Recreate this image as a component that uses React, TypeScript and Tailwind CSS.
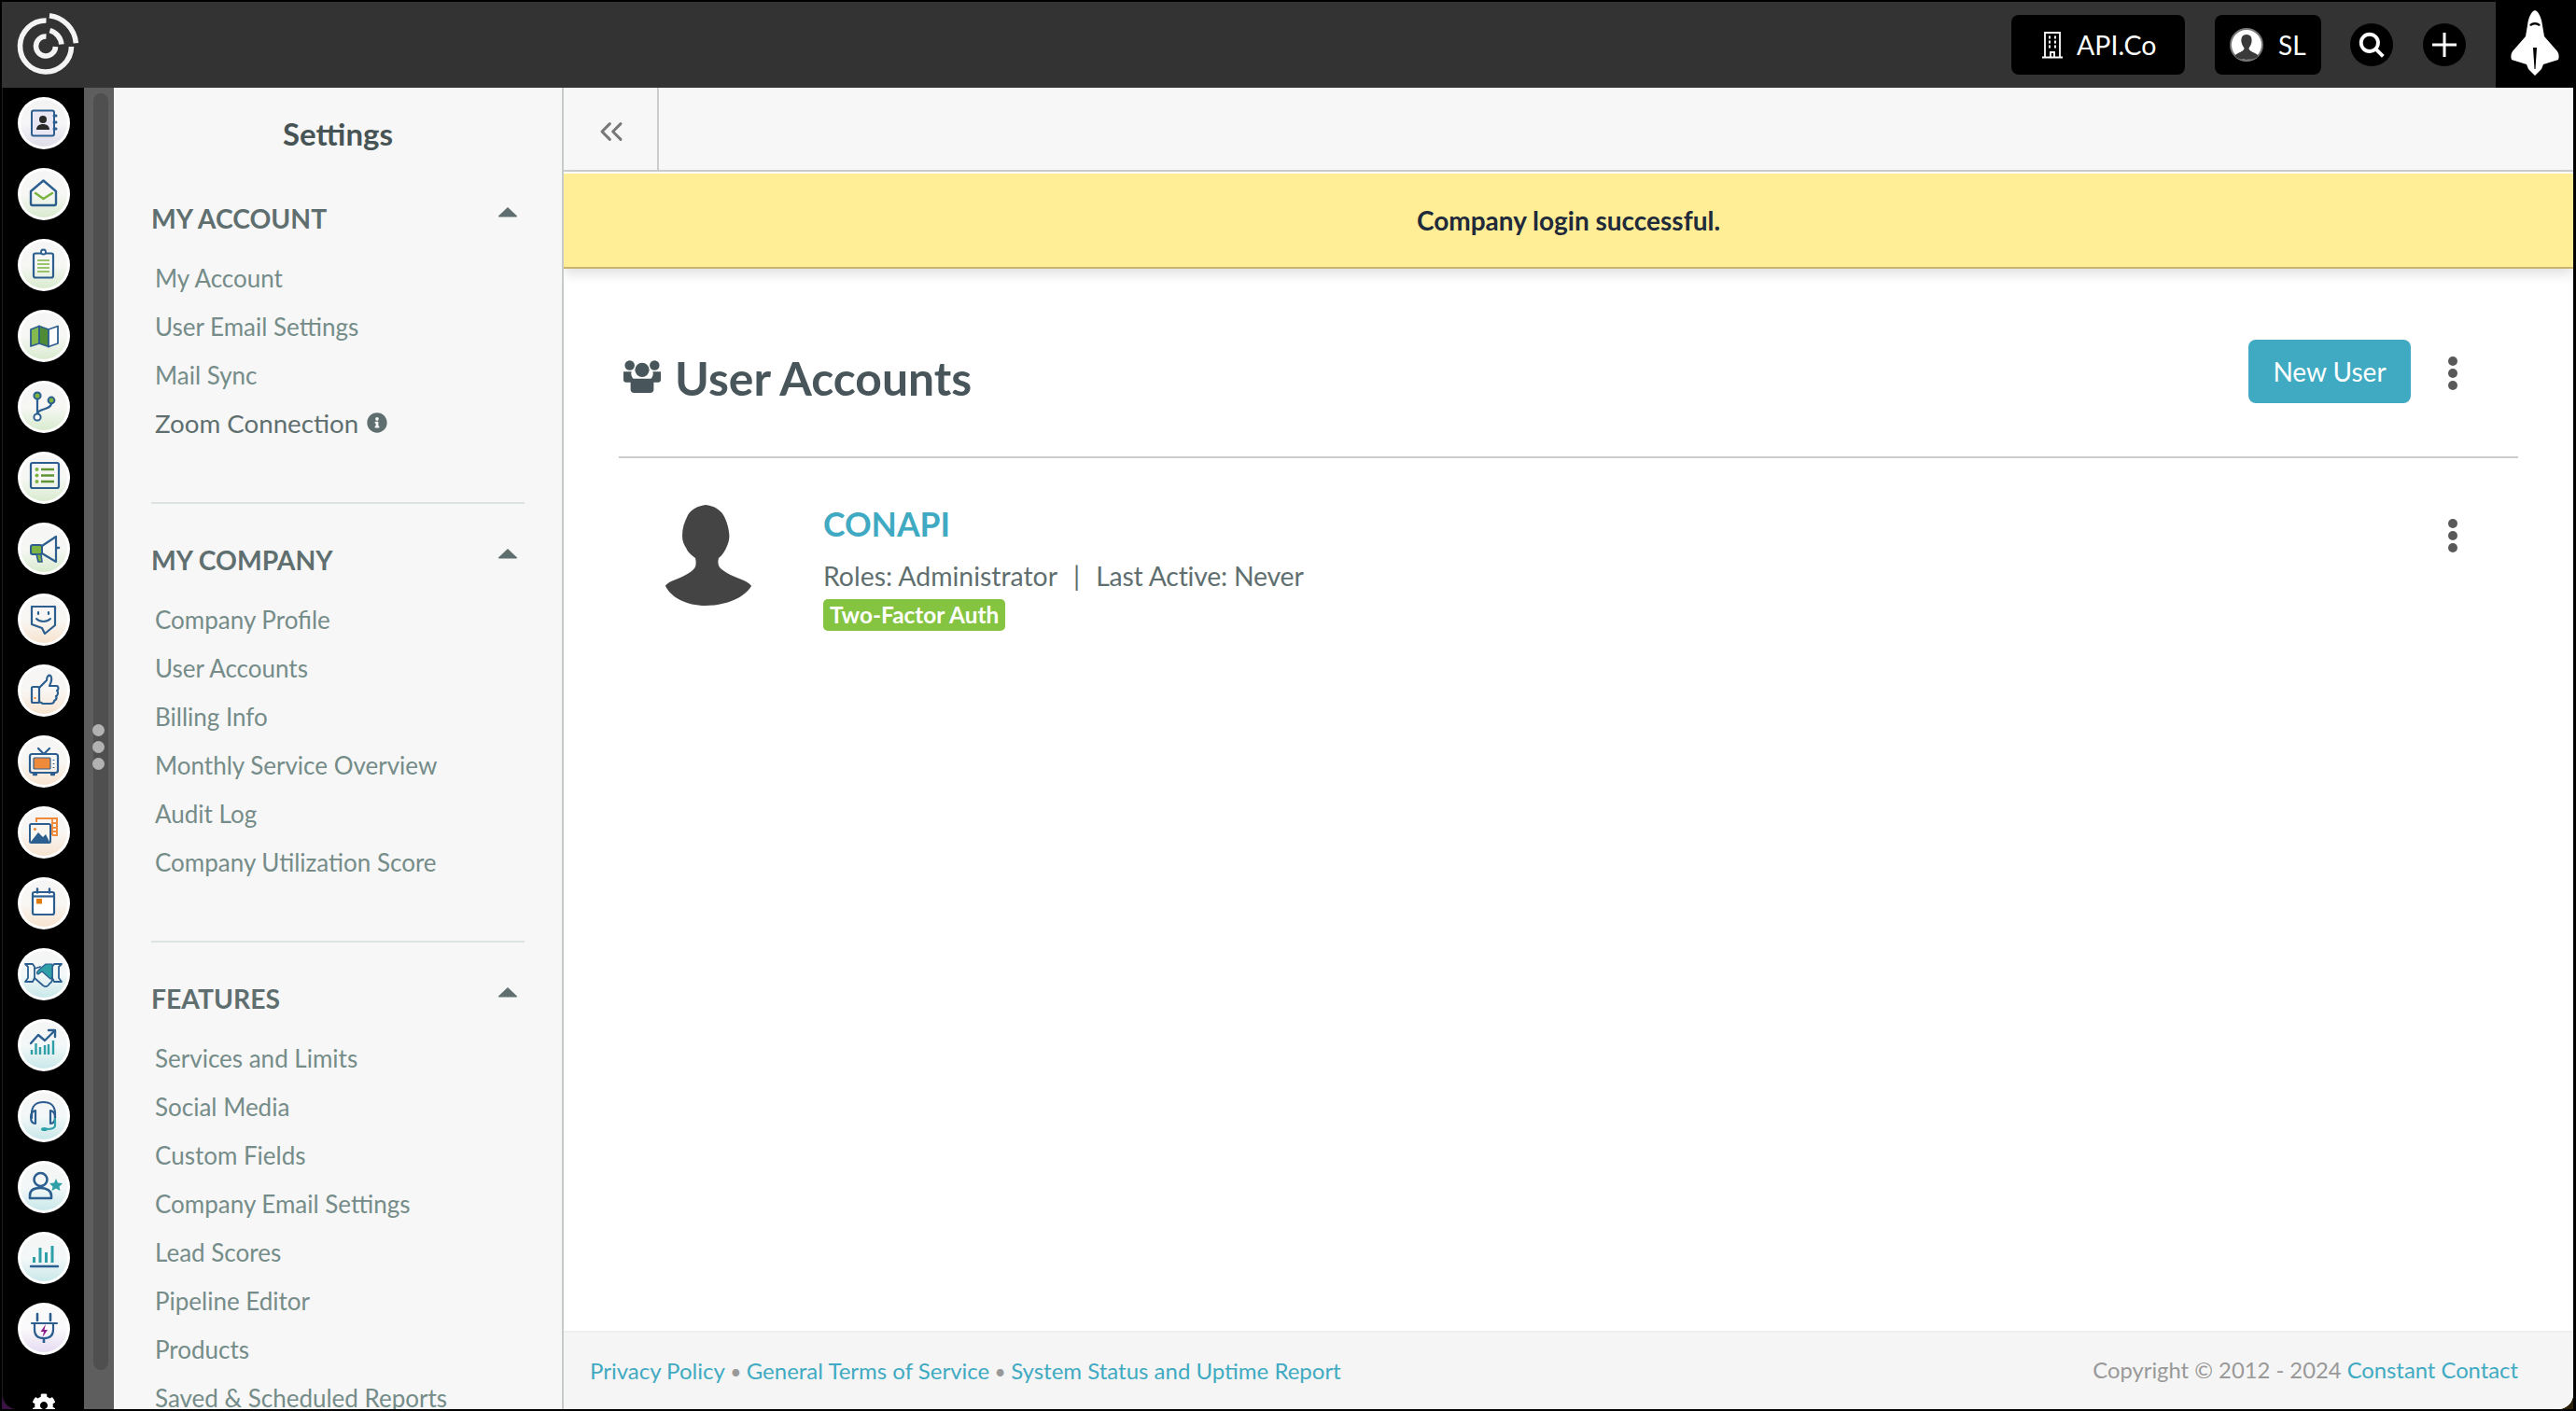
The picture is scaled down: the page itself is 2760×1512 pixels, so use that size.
import type { ReactNode } from "react";
import { ChevronsLeft } from "lucide-react";
import { FaCog, FaInfoCircle } from "react-icons/fa";

const NAVY = "#2c5f8f";
const GREEN = "#7cb342";
const ORANGE = "#ef8a3a";
const TEAL = "#2f9fa8";

const TONES = {
  lavender: "bg-linear-to-b from-[#f3f3f3] via-[#f6f6f8] to-[#dfdde8]",
  green: "bg-linear-to-b from-[#f5f5f5] via-[#f7f8f5] to-[#d9ebcf]",
  orange: "bg-linear-to-b from-[#f5f5f5] via-[#f9f7f4] to-[#f7e3cf]",
  teal: "bg-linear-to-b from-[#f5f5f5] via-[#f4f8f8] to-[#c9e8ea]",
  purple: "bg-linear-to-b from-[#fafafa] via-[#faf9fb] to-[#e6dcf2]",
};

const line = { fill: "none", stroke: NAVY, strokeWidth: 2.2, strokeLinecap: "round", strokeLinejoin: "round" } as const;

const RAIL_ICONS: { tone: keyof typeof TONES; art: ReactNode }[] = [
  {
    tone: "lavender",
    art: (
      <>
        <rect x="15" y="14.5" width="24" height="27" rx="2" fill="#e9e7f3" stroke={NAVY} strokeWidth="2" />
        <path d="M39 20h2M39 27h2M39 34h2" stroke={NAVY} strokeWidth="3" strokeLinecap="round" />
        <circle cx="27" cy="24" r="4" fill="#2a2a2a" />
        <path d="M20 35c0-4 3-6 7-6s7 2 7 6z" fill="#2a2a2a" />
      </>
    ),
  },
  {
    tone: "green",
    art: (
      <>
        <path d="M14 25L27.5 13.5L41 25V38a2 2 0 0 1-2 2H16a2 2 0 0 1-2-2Z" {...line} strokeWidth={2.4} />
        <path d="M19 27L27.5 33L37 27" fill="none" stroke={GREEN} strokeWidth="2.6" strokeLinecap="round" strokeLinejoin="round" />
      </>
    ),
  },
  {
    tone: "green",
    art: (
      <>
        <rect x="17" y="15.5" width="21" height="26" rx="2" {...line} />
        <circle cx="27.5" cy="14" r="2.5" fill="#fff" stroke={NAVY} strokeWidth="1.8" />
        <path d="M21 23h13M21 27h13M21 31h13M21 35h13" stroke={GREEN} strokeWidth="1.6" />
      </>
    ),
  },
  {
    tone: "green",
    art: (
      <>
        <path d="M14 21L23 17.5V36L14 39Z" fill="#83b94f" stroke={NAVY} strokeWidth="1.8" strokeLinejoin="round" />
        <path d="M23 17.5L33 21V39.5L23 36Z" fill="#4f8a34" stroke={NAVY} strokeWidth="1.8" strokeLinejoin="round" />
        <path d="M33 21L43 17.5V36L33 39.5Z" fill="#fff" stroke={NAVY} strokeWidth="1.8" strokeLinejoin="round" />
      </>
    ),
  },
  {
    tone: "green",
    art: (
      <>
        <path d="M21 20V36M36 24C36 32 21 29 21 36" {...line} />
        <circle cx="21" cy="16" r="3.6" fill={GREEN} stroke={NAVY} strokeWidth="2" />
        <circle cx="36" cy="21" r="3.4" fill={GREEN} stroke={NAVY} strokeWidth="2" />
        <circle cx="21" cy="39" r="3.6" fill="#fff" stroke={NAVY} strokeWidth="2" />
      </>
    ),
  },
  {
    tone: "green",
    art: (
      <>
        <rect x="14" y="12" width="30" height="27" rx="2" {...line} />
        <circle cx="20.5" cy="19" r="2" fill={GREEN} />
        <circle cx="20.5" cy="25.5" r="2" fill={GREEN} />
        <circle cx="20.5" cy="32" r="2" fill={GREEN} />
        <path d="M25 19h14M25 25.5h14M25 32h14" stroke="#5f9435" strokeWidth="2.6" />
      </>
    ),
  },
  {
    tone: "green",
    art: (
      <>
        <rect x="14" y="24" width="12" height="10" rx="2" fill={GREEN} stroke={NAVY} strokeWidth="2" />
        <path d="M20 34h5l1 8h-4z" fill={GREEN} stroke={NAVY} strokeWidth="1.6" />
        <path d="M26 25L41 15V42L26 33" {...line} />
        <path d="M42 27h2" stroke={NAVY} strokeWidth="2.6" strokeLinecap="round" />
      </>
    ),
  },
  {
    tone: "orange",
    art: (
      <>
        <path d="M15 14H40V34L29 43L26 37L15 33Z" {...line} />
        <path d="M22 20v2M33 20v2" stroke={NAVY} strokeWidth="2.2" strokeLinecap="round" />
        <path d="M20 27C24 31 31 31 35 27" fill="none" stroke={NAVY} strokeWidth="2" strokeLinecap="round" />
      </>
    ),
  },
  {
    tone: "orange",
    art: (
      <>
        <rect x="15" y="24" width="8" height="17" rx="1.5" {...line} />
        <rect x="17.5" y="35" width="2" height="2" fill={ORANGE} />
        <path d="M23 25L31 17C31 13 33 11 35 12C37 14 36 19 34 23H42C44 24 44 27 42 28C44 30 43 33 41 34C42 36 41 38 39 39C39 41 37 42 35 42H27L23 40" {...line} />
      </>
    ),
  },
  {
    tone: "orange",
    art: (
      <>
        <rect x="13" y="20" width="30" height="20" rx="2.5" {...line} />
        <rect x="17" y="24" width="18" height="12" rx="1" fill={ORANGE} stroke={NAVY} strokeWidth="1.2" />
        <path d="M22 14L28 20L34 14" {...line} />
        <path d="M38.5 26v1M38.5 30v1M38.5 34v1" stroke={NAVY} strokeWidth="1.8" />
        <path d="M17 42h3M36 42h3" stroke={NAVY} strokeWidth="2.4" strokeLinecap="round" />
      </>
    ),
  },
  {
    tone: "orange",
    art: (
      <>
        <path d="M20 17V13H42V31H37" fill="none" stroke={ORANGE} strokeWidth="2" />
        <path d="M37 13V31M37 18h5M37 23h5M37 27h5" stroke={ORANGE} strokeWidth="1.8" />
        <rect x="13" y="19" width="22" height="20" rx="1.5" fill="#f9f6f1" stroke={NAVY} strokeWidth="2" />
        <circle cx="18.5" cy="24.5" r="1.6" fill={ORANGE} />
        <path d="M14 38L22 28L27 33L30 30L34 38Z" fill={NAVY} />
      </>
    ),
  },
  {
    tone: "orange",
    art: (
      <>
        <rect x="16" y="16" width="23" height="24" rx="2" fill="#fff" stroke={NAVY} strokeWidth="2.2" />
        <path d="M16 20.5h23" stroke={NAVY} strokeWidth="2.2" />
        <path d="M21 12.5v4M34 12.5v4" stroke={NAVY} strokeWidth="2.4" strokeLinecap="round" />
        <rect x="20" y="23" width="6" height="5.5" fill="#e07b10" />
      </>
    ),
  },
  {
    tone: "teal",
    art: (
      <>
        <path d="M8 17H16L18 20V32L16 36H8L11 32V20Z" fill="none" stroke={NAVY} strokeWidth="1.8" strokeLinejoin="round" />
        <path d="M47 17H39L37 20V32L39 36H47L44 32V20Z" fill="none" stroke={NAVY} strokeWidth="1.8" strokeLinejoin="round" />
        <path d="M18 32L27 40C30 42 33 41 34 38C36 37 37 35 37 33M18 22L24 20" fill="none" stroke={NAVY} strokeWidth="1.8" strokeLinecap="round" />
        <path d="M24 22L30 17H37V31L35 33L26 25L22 28C20 28 20 25 22 24Z" fill={TEAL} stroke={NAVY} strokeWidth="1.2" strokeLinejoin="round" />
      </>
    ),
  },
  {
    tone: "teal",
    art: (
      <>
        <path d="M14 26L22 17L29 23L39 13" {...line} strokeWidth={2.4} />
        <path d="M33 12H40V19" {...line} strokeWidth={2.4} />
        <path d="M15 33v5M19.500 26v12M24 30v8M29 28v10M33 27v11M38 23v15" stroke={TEAL} strokeWidth="2.400" />
      </>
    ),
  },
  {
    tone: "teal",
    art: (
      <>
        <path d="M15 30V25C15 17 20 13 27.5 13S40 17 40 25V30" {...line} />
        <path d="M19 22V36C15 36 14 32 14 29S15 23 19 22Z" {...line} />
        <path d="M35 22V36C39 36 40 32 40 29S39 23 35 22Z" {...line} />
        <path d="M40 30V38C40 41 36 42 31 42" fill="none" stroke={TEAL} strokeWidth="2.2" />
        <ellipse cx="28.5" cy="42" rx="3.5" ry="2" fill={TEAL} />
      </>
    ),
  },
  {
    tone: "teal",
    art: (
      <>
        <circle cx="24.5" cy="20" r="7" {...line} strokeWidth={2.6} />
        <path d="M13 40V37C13 32 17 29 24 29S36 32 36 37V40Z" {...line} strokeWidth={2.6} />
        <path d="M41 19L43 23.5L48 24L44.5 27.5L45.5 32L41 29.5L36.5 32L37.5 27.5L34 24L39 23.5Z" fill={TEAL} />
      </>
    ),
  },
  {
    tone: "teal",
    art: (
      <>
        <path d="M17.500 27v6M24 17v16M30.500 22v11M37 15v18" stroke={TEAL} strokeWidth="3" />
        <path d="M14 37h29" stroke={NAVY} strokeWidth="2.400" strokeLinecap="round" />
      </>
    ),
  },
  {
    tone: "purple",
    art: (
      <>
        <path d="M21 12v7M35 12v7" stroke={NAVY} strokeWidth="2.6" strokeLinecap="round" />
        <path d="M15 22H42" {...line} />
        <path d="M18 22V29C18 35 22 38 28 38S38 35 38 29V22" {...line} />
        <path d="M28 38v5" stroke={NAVY} strokeWidth="2.6" />
        <path d="M30 23L24.500 31H28L26.500 37L32 29H28.500Z" fill="#8c1f8c" />
      </>
    ),
  },
];

const SECTIONS = [
  {
    title: "MY ACCOUNT",
    items: ["My Account", "User Email Settings", "Mail Sync", "Zoom Connection"],
  },
  {
    title: "MY COMPANY",
    items: ["Company Profile", "User Accounts", "Billing Info", "Monthly Service Overview", "Audit Log", "Company Utilization Score"],
  },
  {
    title: "FEATURES",
    items: ["Services and Limits", "Social Media", "Custom Fields", "Company Email Settings", "Lead Scores", "Pipeline Editor", "Products", "Saved & Scheduled Reports"],
  },
];

function Kebab() {
  return (
    <div className="flex w-[10px] flex-col gap-[3px]">
      <span className="size-[10px] rounded-full bg-[#595959]" />
      <span className="size-[10px] rounded-full bg-[#595959]" />
      <span className="size-[10px] rounded-full bg-[#595959]" />
    </div>
  );
}

function TopBar() {
  return (
    <header className="flex h-[92px] shrink-0 items-center bg-[#333333]">
      <svg width="98" height="92" viewBox="2 2 98 92" fill="none" stroke="#f4f4f4" strokeWidth="5.6">
        <path d="M52.960 16.740A32.500 32.500 0 0 1 81.380 46.170" />
        <path d="M76.500 50A27.500 27.500 0 1 1 49.500 22" />
        <path d="M53.400 32.600A17 17 0 0 1 65.900 47.500" />
        <path d="M59.500 50A10.500 10.500 0 1 1 49.500 39" />
      </svg>
      <div className="ml-auto flex items-center">
        <div className="flex h-[64px] w-[186px] items-center rounded-[8px] bg-black pl-[32px] text-white">
          <svg width="24" height="30" viewBox="0 0 24 30" fill="none" stroke="#fff" strokeWidth="1.8">
            <path d="M4 28V2H20V28M1 28.500H23" />
            <path d="M8 7h2M14 7h2M8 12h2M14 12h2M8 17h2M14 17h2" strokeWidth="3" />
            <path d="M10 28v-5h4v5" />
          </svg>
          <span className="ml-[14px] text-[28.500px] leading-none">API.Co</span>
        </div>
        <div className="ml-[32px] flex h-[64px] w-[114px] items-center rounded-[8px] bg-black pl-[16px] text-white">
          <svg width="36" height="36" viewBox="0 0 36 36">
            <circle cx="18" cy="18" r="17" fill="#fff" stroke="#777" strokeWidth="2" />
            <path d="M18 7C13 7 12 11 12.500 15C13 18 14.500 20 15.500 21.500C15.500 24 13 25 9 27C6 28.500 5 30 6 30.500C10 35 26 35 30 30.500C31 30 30 28.500 27 27C23 25 20.500 24 20.500 21.500C21.500 20 23 18 23.500 15C24 11 23 7 18 7Z" fill="#3a3a3a" />
          </svg>
          <span className="ml-[16px] text-[28px] leading-none">SL</span>
        </div>
        <div className="ml-[31px] flex size-[46px] items-center justify-center rounded-full bg-black">
          <svg width="30" height="30" viewBox="0 0 28 28" fill="none" stroke="#fff">
            <circle cx="12" cy="12" r="8.500" strokeWidth="3.600" />
            <path d="M18 18L25.500 25.500" strokeWidth="3.600" />
          </svg>
        </div>
        <div className="ml-[32px] flex size-[46px] items-center justify-center rounded-full bg-black">
          <svg width="28" height="28" viewBox="0 0 28 28" stroke="#fff" strokeWidth="3">
            <path d="M14 1V27M1 14H27" />
          </svg>
        </div>
        <div className="ml-[32px] flex h-[92px] w-[83px] items-start justify-center bg-black pt-[9px]">
          <svg width="52" height="70" viewBox="0 0 52 70">
            <path d="M26 0C30 1 33 8 34 16L36 28L50 44C52 47 52 50 51 53L35 58L33 63L26 70L19 63L17 58L1 53C0 50 0 47 2 44L16 28L18 16C19 8 22 1 26 0Z" fill="#fff" />
            <path d="M20 16C22 12 30 12 32 16L30 17C28 15 24 15 22 17Z" fill="#000" />
            <path d="M24 40H28L26.500 63H25.500Z" fill="#000" />
          </svg>
        </div>
      </div>
    </header>
  );
}

function IconRail() {
  return (
    <nav className="flex w-[88px] shrink-0 flex-col items-center gap-[20px] overflow-hidden rounded-bl-[16px] border-l border-[#1c1c1c] bg-black pt-[10px]">
      {RAIL_ICONS.map((icon, i) => (
        <div key={i} className="size-[56px] shrink-0 rounded-full bg-white p-[3px]">
          <div className={`size-full rounded-full ${TONES[icon.tone]}`}>
            <svg width="50" height="50" viewBox="3 3 50 50">
              {icon.art}
            </svg>
          </div>
        </div>
      ))}
      <FaCog className="mt-[21px] size-[26px] shrink-0 text-white" />
    </nav>
  );
}

function Splitter() {
  return (
    <div className="relative flex w-[32px] shrink-0 justify-start bg-[#5e5e5e] pt-[6px] pb-[42px] pl-[10px]">
      <div className="w-[16px] rounded-[8px] bg-[#4f4f4f]" />
      <div className="absolute top-[682px] left-[9px] flex flex-col gap-[5px]">
        <span className="size-[13px] rounded-full bg-[#b2b2b2]" />
        <span className="size-[13px] rounded-full bg-[#b2b2b2]" />
        <span className="size-[13px] rounded-full bg-[#b2b2b2]" />
      </div>
    </div>
  );
}

function Sidebar() {
  return (
    <aside className="w-[482px] shrink-0 overflow-hidden border-r-2 border-[#c6cbca] bg-[#f7f7f7]">
      <h1 className="mb-[12px] flex h-[102px] items-center justify-center pb-[2px] text-[33px] font-bold text-[#475456]">Settings</h1>
      {SECTIONS.map((section, i) => (
        <section key={section.title}>
          <div className="flex h-[52px] items-center justify-between pr-[47px] pl-[40px]">
            <h2 className="text-[28.300px] font-bold text-[#5f6f6f]">{section.title}</h2>
            <svg className="-mt-[14px]" width="22" height="12" viewBox="0 0 22 12">
              <path d="M11 1L21 10.500Q21.500 11.500 20 11.500H2Q0.500 11.500 1 10.500Z" fill="#5f6f6f" />
            </svg>
          </div>
          <ul className="mt-[12px] pl-[44px]">
            {section.items.map((item) =>
              item === "Zoom Connection" ? (
                <li key={item} className="flex h-[52px] items-center text-[27.700px] text-[#5f6f6f]">
                  {item}
                  <FaInfoCircle className="-mt-[2px] ml-[9px] size-[22px]" />
                </li>
              ) : (
                <li key={item} className="flex h-[52px] items-center pt-[1px] text-[26px] text-[#758c89]">
                  {item}
                </li>
              ),
            )}
          </ul>
          {i < SECTIONS.length - 1 && <div className="mx-[40px] mt-[58px] mb-[34px] h-[2px] w-[400px] bg-[#dde3e2]" />}
        </section>
      ))}
    </aside>
  );
}

function MainPanel() {
  return (
    <main className="flex min-w-0 flex-1 flex-col overflow-hidden rounded-br-[16px] bg-white">
      <div className="flex h-[90px] shrink-0 border-b-2 border-[#cccccc] bg-[#f7f7f7]">
        <div className="flex w-[102px] items-center justify-center border-r-2 border-[#cccccc]">
          <ChevronsLeft className="mt-[5px] ml-[2px]" size={40} strokeWidth={1.8} color="#777777" />
        </div>
      </div>
      <div className="mt-[2px] flex h-[102px] shrink-0 items-center justify-center border-b-2 border-[#c9b56f] bg-[#ffee96] text-[28px] font-bold text-[#1f2a3a] shadow-[0_6px_12px_rgba(0,0,0,0.12)]">
        Company login successful.
      </div>
      <div className="flex-1 px-[59px]">
        <div className="flex h-[203px] items-start justify-between border-b-2 border-[#cccccc] pt-[76px] pr-[65px]">
          <div className="mt-[3px] flex items-center text-[#48555a]">
            <svg className="-mt-[5px] ml-[4px]" width="42" height="40" viewBox="0 0 44 42" fill="currentColor">
              <circle cx="8" cy="9" r="5.500" />
              <circle cx="36" cy="9" r="5.500" />
              <circle cx="22" cy="14" r="8" />
              <path d="M1 16h9c-1 3 0 6 3 9l-1 3H4c-2 0-3-1-3-3ZM43 16h-9c1 3 0 6-3 9l1 3h8c2 0 3-1 3-3Z" />
              <path d="M12 24h20c1 0 3 2 3 5v7c0 3-2 4-4 4H13c-2 0-4-1-4-4v-7c0-3 2-5 3-5Z" />
            </svg>
            <h2 className="ml-[14px] text-[49.800px] leading-[76px] font-bold">User Accounts</h2>
          </div>
          <div className="flex items-center gap-[40px]">
            <button className="h-[68px] w-[174px] rounded-[8px] bg-[#3faac2] text-[28px] text-white">New User</button>
            <div className="mt-[4px]">
              <Kebab />
            </div>
          </div>
        </div>
        <div className="flex items-start justify-between pr-[65px]">
          <div className="flex items-start">
            <svg className="mt-[49px] ml-[48px]" width="95" height="110" viewBox="0 0 95 110" fill="#444444">
              <path d="M45 1C38 2 30 5 26 12C22 20 20 26 20 34C20 40 22 44 24 47C26 52 30 55 34 58C35 62 35 66 33 69C28 75 18 79 8 83C4 85 2 87 2 88C8 100 24 109 45 109C66 109 86 101 94 88C93 86 90 84 86 82C76 78 66 74 61 69C58 66 58 62 59 58C63 55 66 50 68 45C70 40 71 36 70 30C69 22 66 14 62 9C57 4 52 2 45 1Z" />
            </svg>
            <div className="ml-[76px] flex flex-col items-start pt-[49px]">
              <a className="text-[35.500px] leading-[44px] font-bold text-[#3faac2]">CONAPI</a>
              <p className="mt-[15px] text-[28.400px] leading-[36px] text-[#5f6f6f]">
                Roles: Administrator<span className="mr-[17px] ml-[17px]">|</span>
                <span className="tracking-[-0.2px]">Last Active: Never</span>
              </p>
              <span className="mt-[7px] rounded-[5px] bg-[#85c440] px-[7px] text-[24.400px] leading-[34px] font-bold text-white">Two-Factor Auth</span>
            </div>
          </div>
          <div className="pt-[65px]">
            <Kebab />
          </div>
        </div>
      </div>
      <footer className="flex h-[84px] shrink-0 items-center justify-between border-t-2 border-[#eeeeee] bg-[#f5f5f5] pr-[59px] pl-[28px] text-[24px] text-[#999999]">
        <div>
          <a className="text-[#3faac2]">Privacy Policy</a>
          <span className="text-[21px]"> • </span>
          <a className="text-[#3faac2]">General Terms of Service</a>
          <span className="text-[21px]"> • </span>
          <a className="text-[#3faac2]">System Status and Uptime Report</a>
        </div>
        <div className="text-[23.800px]">
          Copyright © 2012 - 2024 <a className="text-[#3faac2]">Constant Contact</a>
        </div>
      </footer>
    </main>
  );
}

export default function App() {
  return (
    <div className="h-[1512px] w-[2760px] overflow-hidden border-t-2 border-r-[3px] border-b-2 border-l-2 border-black bg-linear-to-r from-[#3b1245] to-[#2b2008] font-[Lato,sans-serif]">
      <div className="flex h-full flex-col">
        <TopBar />
        <div className="flex min-h-0 flex-1">
          <IconRail />
          <Splitter />
          <Sidebar />
          <MainPanel />
        </div>
      </div>
    </div>
  );
}
